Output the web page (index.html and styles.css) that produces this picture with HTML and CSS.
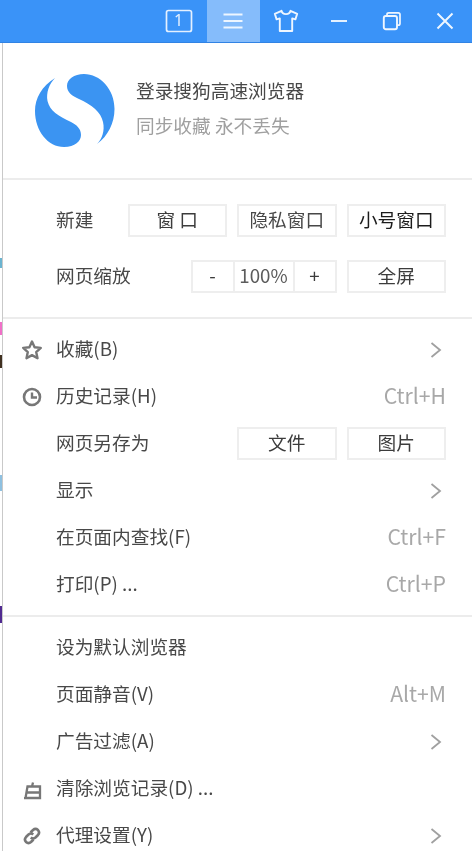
FILE: index.html
```html
<!DOCTYPE html>
<html lang="zh-CN">
<head>
    <meta charset="UTF-8">
    <title>搜狗高速浏览器菜单</title>
    <link rel="stylesheet" href="styles.css">
</head>
<body>

<!-- Title bar -->
<div class="titlebar">
    <div class="tb-btn tb-tabs">
        <svg width="30" height="24" viewBox="0 0 30 24"><rect x="2.500" y="1.500" width="25" height="21" rx="2" fill="none" stroke="#e4f0ff" stroke-width="1.700"/></svg>
        <span class="tab-count">1</span>
    </div>
    <div class="tb-btn tb-active">
        <svg width="22" height="18" viewBox="0 0 22 18"><path d="M1.500 2.500h19M1.500 9h19M1.500 15.500h19" fill="none" stroke="#eef6ff" stroke-width="1.800"/></svg>
    </div>
    <div class="tb-btn">
        <svg width="26" height="24" viewBox="0 0 26 24"><path d="M8.500 1.800 L1.800 4.800 L3.600 10.400 L6.800 9.400 V22 H19.200 V9.400 L22.400 10.400 L24.200 4.800 L17.500 1.800 C16.600 6.200 9.400 6.200 8.500 1.800 Z" fill="none" stroke="#eef6ff" stroke-width="1.900" stroke-linejoin="round"/></svg>
    </div>
    <div class="tb-btn">
        <svg width="18" height="4" viewBox="0 0 18 4"><path d="M1 2h16" stroke="#eef6ff" stroke-width="1.900"/></svg>
    </div>
    <div class="tb-btn">
        <svg width="20" height="20" viewBox="0 0 20 20"><path d="M5 5V3.500Q5 1.800 6.800 1.800H16.200Q18 1.800 18 3.500V12.500Q18 14.200 16.200 14.200H15" fill="none" stroke="#eef6ff" stroke-width="1.700"/><rect x="1.800" y="5" width="13.200" height="13.200" rx="2" fill="none" stroke="#eef6ff" stroke-width="1.900"/></svg>
    </div>
    <div class="tb-btn">
        <svg width="18" height="18" viewBox="0 0 18 18"><path d="M1.500 1.500l15 15M16.500 1.500l-15 15" stroke="#eef6ff" stroke-width="2"/></svg>
    </div>
</div>

<div class="page">
    <div class="behind"></div>

    <div class="panel">
        <!-- Account -->
        <div class="account">
            <svg class="logo" width="80" height="75" viewBox="35 72 80 75">
                <path d="M55 77 C42 85 35 97 35 110 C35 130 48 146 64 146 C75 146 81 140 81 134 C81 128 77 124 71 121 C58 115 50 110 47.500 100 C46 92 49 83 55 77 Z" fill="#3b94f2"/>
                <path d="M97 143 C108 135 114.500 122 114.500 108 C114.500 88 100 73 84 73 C74 73 67 78 67 85 C67 91 72 95 79 98 C92 104 101 111 103 121 C105 130 102 138 97 143 Z" fill="#3b94f2"/>
            </svg>
            <div>
                <div class="account-title">登录搜狗高速浏览器</div>
                <div class="account-sub">同步收藏 永不丢失</div>
            </div>
        </div>

        <!-- New window / zoom -->
        <div class="section tools">
            <div class="tool-row">
                <span class="tool-label">新建</span>
                <div class="btn-grid">
                    <div class="btn dark">窗 口</div>
                    <div class="btn">隐私窗口</div>
                    <div class="btn darker">小号窗口</div>
                </div>
            </div>
            <div class="tool-row">
                <span class="tool-label">网页缩放</span>
                <div class="zoom-group">
                    <div class="zoom-cell">-</div>
                    <div class="zoom-cell zoom-value">100%</div>
                    <div class="zoom-cell">+</div>
                </div>
                <div class="btn full">全屏</div>
            </div>
        </div>

        <!-- Menu items -->
        <div class="section menu">
            <div class="item">
                <svg class="icon" width="22" height="22" viewBox="0 0 22 22"><path d="M11 2.500l2.600 5.700 6.200.7-4.600 4.200 1.300 6.100L11 16.100l-5.500 3.100 1.300-6.100-4.600-4.200 6.200-.7z" fill="none" stroke="#777" stroke-width="2.400" stroke-linejoin="round"/></svg>
                <span>收藏(B)</span>
                <svg class="chevron" width="12" height="16" viewBox="0 0 12 16"><path d="M1.500 1l8.500 7-8.500 7" fill="none" stroke="#a0a0a0" stroke-width="1.800"/></svg>
            </div>
            <div class="item">
                <svg class="icon" width="22" height="22" viewBox="0 0 22 22"><circle cx="11" cy="11" r="8" fill="none" stroke="#777" stroke-width="2.600"/><path d="M11 6.500V11.500H16" fill="none" stroke="#777" stroke-width="2.400"/></svg>
                <span>历史记录(H)</span>
                <span class="shortcut">Ctrl+H</span>
            </div>
            <div class="item">
                <span>网页另存为</span>
                <div class="save-btns">
                    <div class="btn dark">文件</div>
                    <div class="btn dark">图片</div>
                </div>
            </div>
            <div class="item">
                <span>显示</span>
                <svg class="chevron" width="12" height="16" viewBox="0 0 12 16"><path d="M1.500 1l8.500 7-8.500 7" fill="none" stroke="#a0a0a0" stroke-width="1.800"/></svg>
            </div>
            <div class="item">
                <span>在页面内查找(F)</span>
                <span class="shortcut">Ctrl+F</span>
            </div>
            <div class="item">
                <span>打印(P) ...</span>
                <span class="shortcut">Ctrl+P</span>
            </div>
        </div>

        <div class="section menu menu-last">
            <div class="item">
                <span>设为默认浏览器</span>
            </div>
            <div class="item">
                <span>页面静音(V)</span>
                <span class="shortcut">Alt+M</span>
            </div>
            <div class="item">
                <span>广告过滤(A)</span>
                <svg class="chevron" width="12" height="16" viewBox="0 0 12 16"><path d="M1.500 1l8.500 7-8.500 7" fill="none" stroke="#a0a0a0" stroke-width="1.800"/></svg>
            </div>
            <div class="item">
                <svg class="icon" width="22" height="22" viewBox="0 0 22 22"><path d="M12 4.500L11 8.500M6.500 8.500H19V20H4.500ZM5.500 14.500H19M3 20.200H20" fill="none" stroke="#777" stroke-width="2.300"/></svg>
                <span>清除浏览记录(D) ...</span>
            </div>
            <div class="item">
                <svg class="icon" width="22" height="22" viewBox="0 0 22 22"><path d="M9.500 7.500L12 5Q14.500 2.800 17 5Q19.200 7.500 17 10L14.500 12.500Q12 14.500 9.800 12.500M12.500 14.500L10 17Q7.500 19.200 5 17Q2.800 14.500 5 12L7.500 9.500Q10 7.500 12.200 9.500" fill="none" stroke="#777" stroke-width="2.600"/></svg>
                <span>代理设置(Y)</span>
                <svg class="chevron" width="12" height="16" viewBox="0 0 12 16"><path d="M1.500 1l8.500 7-8.500 7" fill="none" stroke="#a0a0a0" stroke-width="1.800"/></svg>
            </div>
        </div>
    </div>
</div>

</body>
</html>
```

FILE: styles.css
```css
body {
    margin: 0;
    width: 472px;
    height: 851px;
    overflow: hidden;
    background: #fff;
    font-family: "Noto Sans CJK SC", "Noto Sans", sans-serif;
    font-size: 18.7px;
    color: #484848;
    filter: blur(0.4px); /* the reference is a soft, upscaled capture */
}

.titlebar {
    display: flex;
    justify-content: flex-end;
    height: 42px;
    padding-right: 1px;
    background: #3a93f8;
    border-bottom: 1px solid #3183e4;
}
.tb-btn {
    position: relative;
    display: flex;
    align-items: center;
    justify-content: center;
    width: 52.800px;
}
.tb-active {
    background: #85bcfb;
}
.tb-tabs svg {
    margin-right: 4px;
}
.tab-count {
    position: absolute;
    top: 8px;
    left: 0;
    right: 4px;
    text-align: center;
    font-family: "Noto Sans", sans-serif;
    font-size: 16px;
    line-height: 25px;
    color: #e4f0ff;
}

.page {
    display: flex;
    height: 808px;
}
.behind {
    width: 2px;
    background: linear-gradient(to bottom,
        #fff 0, #fff 215px, #6bb4d0 215px, #6bb4d0 225px, #fff 225px,
        #fff 279px, #f070c8 279px, #f070c8 292px, #fff 292px,
        #fff 312px, #403020 312px, #403020 325px, #fff 325px,
        #fff 432px, #8ec0e0 432px, #8ec0e0 448px, #fff 448px,
        #fff 563px, #502a90 563px, #502a90 580px, #fff 580px);
}
.panel {
    flex: 1;
    border-left: 1px solid #c9c9c9;
}

.account {
    display: flex;
    align-items: center;
    gap: 21px;
    height: 135px;
    padding-left: 32px;
    border-bottom: 2px solid #ececec;
}
.logo {
    flex-shrink: 0;
}
.account-title {
    margin-top: -6px;
    line-height: 26px;
    color: #484848;
}
.account-sub {
    margin-top: 9px;
    line-height: 26px;
    color: #a0a0a0;
}

.section {
    border-bottom: 2px solid #ececec;
}
.section:last-child {
    border-bottom: none;
}

.tools {
    display: flex;
    flex-direction: column;
    gap: 23px;
    padding: 24px 26px 24px 53px;
}
.tool-row {
    display: flex;
    align-items: center;
}
.tool-label {
    flex: 1;
    padding-bottom: 4px;
}
.btn-grid {
    display: flex;
    gap: 10px;
}
.btn {
    box-sizing: border-box;
    width: 99.500px;
    height: 33px;
    line-height: 25px;
    text-align: center;
    border: 2px solid #eee;
    color: #484848;
}
.dark {
    color: #3c3c3c;
}
.darker {
    color: #1c1c1c;
}
.full {
    margin-left: 10px;
    color: #3c3c3c;
}
.zoom-group {
    display: flex;
    box-sizing: border-box;
    height: 33px;
    border: 2px solid #eee;
}
.zoom-cell {
    box-sizing: border-box;
    width: 40px;
    line-height: 25px;
    text-align: center;
    color: #3c3c3c;
}
.zoom-value {
    width: 62px;
    border-left: 2px solid #eee;
    border-right: 2px solid #eee;
    color: #5c5c5c;
}

.menu {
    padding: 7px 26px 7px 53px;
}
.menu-last {
    padding-top: 7px;
}
.item {
    position: relative;
    display: flex;
    align-items: center;
    justify-content: space-between;
    height: 47px;
}
.item > span {
    padding-bottom: 4px;
}
.icon {
    position: absolute;
    left: -35px;
    top: 12.500px;
}
.chevron {
    margin-right: 4px;
}
.shortcut {
    font-size: 21.200px;
    color: #a8a8a8;
}
.save-btns {
    display: flex;
    gap: 10px;
}
```
